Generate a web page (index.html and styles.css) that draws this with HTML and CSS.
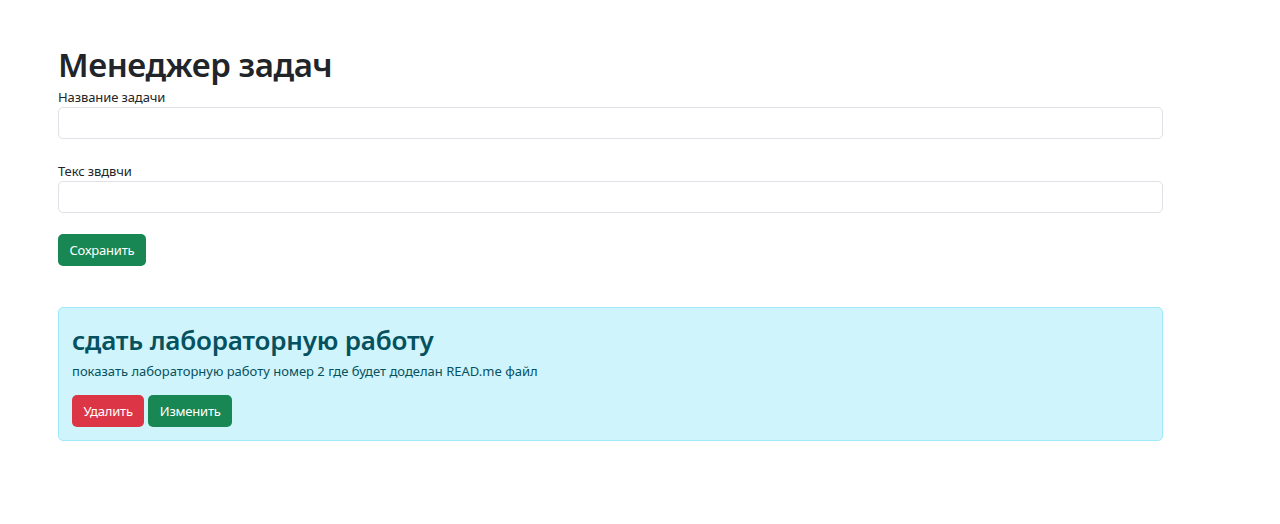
FILE: index.html
```html
<!DOCTYPE html>
<html lang="ru">
<head>
<meta charset="utf-8">
<title>Менеджер задач</title>
<link rel="stylesheet" href="styles.css">
</head>
<body>
<main class="page">
  <h1 class="title">Менеджер задач</h1>
  <form class="task-form">
    <label class="field">
      <span class="field-label">Название задачи</span>
      <input class="field-input" type="text">
    </label>
    <label class="field">
      <span class="field-label">Текс звдвчи</span>
      <input class="field-input" type="text">
    </label>
    <div class="form-actions">
      <button type="button" class="btn btn-success">Сохранить</button>
    </div>
  </form>
  <section class="task-card">
    <h2 class="task-title">сдать лабораторную работу</h2>
    <p class="task-text">показать лабораторную работу номер 2 где будет доделан READ.me файл</p>
    <div class="task-actions">
      <button type="button" class="btn btn-danger">Удалить</button>
      <button type="button" class="btn btn-success">Изменить</button>
    </div>
  </section>
</main>
</body>
</html>
```
FILE: styles.css
```css
* { box-sizing: border-box; }
body {
  margin: 0;
  background: #fff;
  color: #212529;
  font-family: "Noto Sans", "Open Sans", sans-serif;
}
.page {
  width: 1105px;
  margin-left: 58px;
  padding-top: 42px;
  display: flex;
  flex-direction: column;
}
.title {
  margin: 0;
  font-size: 33px;
  font-weight: 600;
  line-height: 46px;
  letter-spacing: -0.45px;
}
.task-form {
  display: flex;
  flex-direction: column;
  gap: 23px;
}
.field {
  display: flex;
  flex-direction: column;
}
.field-label {
  font-size: 13px;
  line-height: 19px;
  height: 19px;
  letter-spacing: -0.1px;
}
.field-input {
  height: 32px;
  border: 1px solid #dee2e6;
  border-radius: 5px;
  background: #fff;
  font: inherit;
}
.form-actions { display: flex; margin-top: -2px; }
.btn {
  height: 32px;
  padding: 0 11.5px;
  border: 0;
  border-radius: 5px;
  color: #fff;
  font-family: inherit;
  font-size: 13px;
  letter-spacing: -0.2px;
  cursor: pointer;
}
.btn-success { background: #198754; }
.btn-danger { background: #dc3545; }
.task-card {
  margin-top: 41px;
  padding: 13px 13px 13px;
  background: #cff4fc;
  border: 1px solid #9eeaf9;
  border-radius: 5px;
  color: #055160;
}
.task-title {
  margin: 0;
  font-size: 26px;
  font-weight: 600;
  line-height: 38px;
  letter-spacing: -0.2px;
}
.task-text {
  margin: 3px 0 14px;
  font-size: 13px;
  line-height: 19px;
}
.task-actions {
  display: flex;
  gap: 4px;
}
```
